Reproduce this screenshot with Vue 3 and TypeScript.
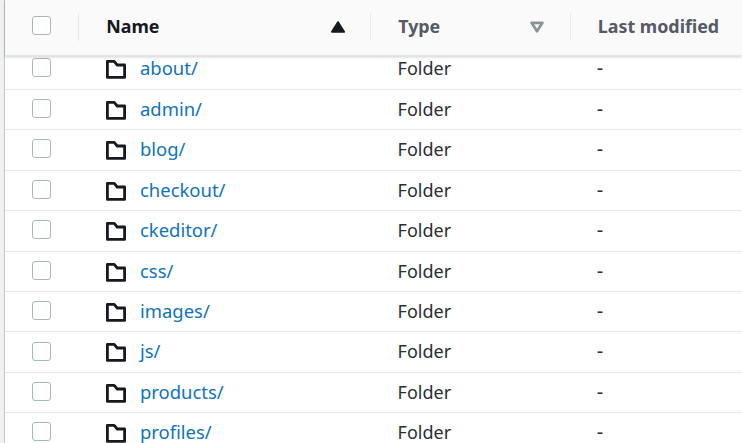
<script setup lang="ts">
interface Entry {
  name: string
  type: string
  modified: string
}

const names: string[] = [
  'about/', 'admin/', 'blog/', 'checkout/', 'ckeditor/',
  'css/', 'images/', 'js/', 'products/', 'profiles/',
]
const entries: Entry[] = names.map((name) => ({ name, type: 'Folder', modified: '-' }))
</script>

<template>
  <main class="page">
    <section class="table">
      <header class="head">
        <div class="select"><span class="box"></span></div>
        <div class="cell name">
          <span>Name</span>
          <svg class="sort" width="14" height="12" viewBox="0 0 14 12">
            <path d="M7 1.2 13 10.8H1Z" fill="#16191f" stroke="#16191f" stroke-width="2" stroke-linejoin="round" />
          </svg>
        </div>
        <div class="cell type">
          <span>Type</span>
          <svg class="sort" width="14" height="12" viewBox="0 0 14 12">
            <path d="M1.6 1.8H12.4L7 10.3Z" fill="none" stroke="#879596" stroke-width="2.7" stroke-linejoin="round" />
          </svg>
        </div>
        <div class="cell modified"><span>Last modified</span></div>
      </header>
      <div class="body">
        <div v-for="entry in entries" :key="entry.name" class="row">
          <div class="select"><span class="box"></span></div>
          <div class="entry">
            <svg class="folder" width="20" height="19" viewBox="0 0 20 19">
              <path d="M1.4 1.4H8.2L11.2 5H18.6V17.4H1.4Z" fill="none" stroke="#16191f" stroke-width="2.8" stroke-linejoin="round" />
            </svg>
            <a class="link">{{ entry.name }}</a>
          </div>
          <div class="text">{{ entry.type }}</div>
          <div class="text dash">{{ entry.modified }}</div>
        </div>
      </div>
    </section>
  </main>
</template>

<style>
body {
  margin: 0;
}
</style>

<style scoped>
.page {
  box-sizing: border-box;
  height: 443px;
  padding-left: 4px;
  overflow: hidden;
  background: #f0f1f1;
  font: 18px/26px "Noto Sans", sans-serif;
  color: #2b2e33;
}
.table {
  box-sizing: border-box;
  height: 443px;
  border-left: 1px solid #c2c5c5;
  background: #fff;
}
.head,
.row {
  box-sizing: border-box;
  display: grid;
  grid-template-columns: 73px 292px 200px 1fr;
}
.head {
  position: relative;
  z-index: 1;
  height: 56px;
  padding-top: 13px;
  background: #fafafa;
  border-bottom: 1px solid #e0e4e4;
  box-shadow: 0 1px 3px rgba(0, 28, 36, 0.2);
  font-size: 17.85px;
  font-weight: 700;
  color: #545b64;
}
.cell {
  box-sizing: border-box;
  display: flex;
  justify-content: space-between;
  height: 28px;
  padding: 0 25px 0 27.2px;
  border-left: 1px solid #e6e9e9;
  white-space: nowrap;
}
.name {
  color: #16191f;
}
.type {
  padding-right: 26px;
}
.modified {
  padding-right: 0;
  padding-left: 26.8px;
}
.sort {
  margin-top: 8px;
}
.select {
  padding: 9.15px 0 0 27px;
}
.head .select {
  padding-top: 3px;
}
.box {
  box-sizing: border-box;
  display: block;
  width: 19px;
  height: 19px;
  border: 1px solid #aab7b8;
  border-radius: 3px;
  background: #fff;
}
.body {
  margin-top: -6.7px;
}
.row {
  height: 40.45px;
  border-bottom: 1px solid #e6e9e9;
}
.entry {
  display: flex;
  gap: 14px;
  padding: 6.1px 0 0 28px;
}
.folder {
  flex: none;
  margin-top: 5px;
}
.link {
  font-size: 18.45px;
  color: #0f73b9;
}
.text {
  padding: 6.1px 0 0 27.6px;
}
.dash {
  padding-left: 26.8px;
  font-size: 20px;
}
</style>
